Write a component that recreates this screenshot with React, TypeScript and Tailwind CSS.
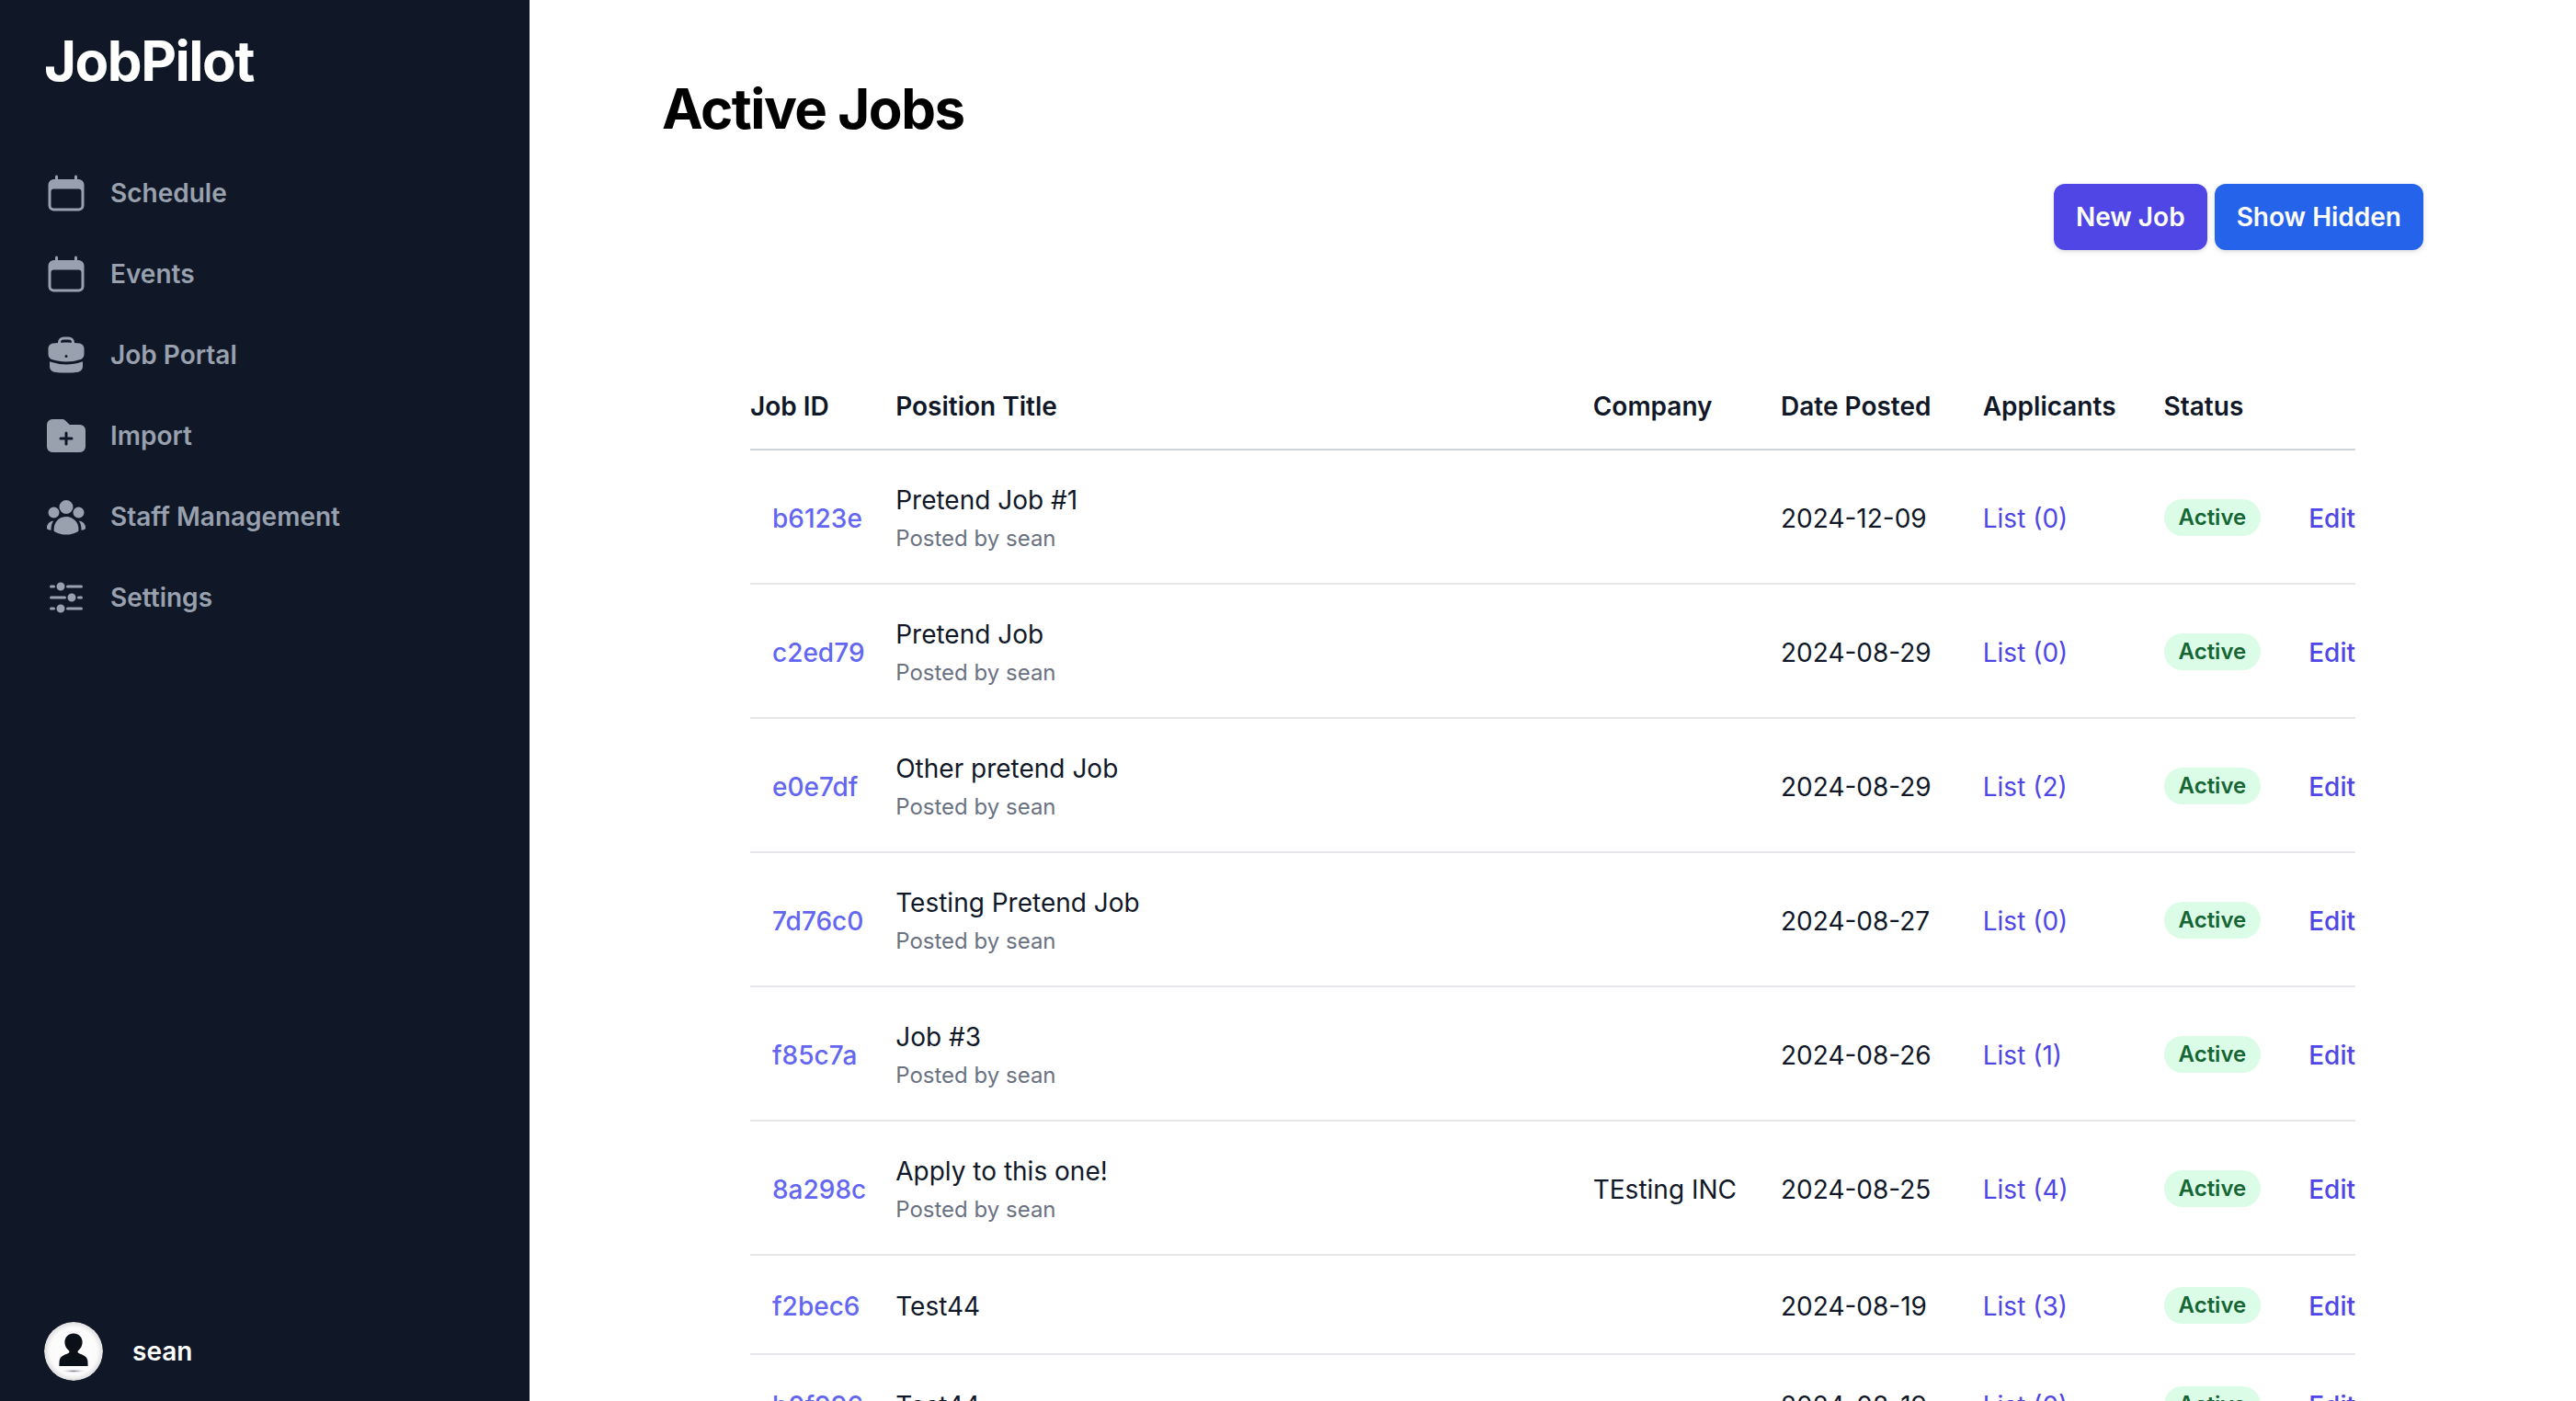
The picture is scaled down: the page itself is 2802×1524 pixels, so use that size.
import React from "react";

const icons: Record<string, React.ReactNode> = {
  calendar: (
    <path
      fillRule="evenodd"
      clipRule="evenodd"
      d="M6.75 2.25A.75.75 0 0 1 7.5 3v1.5h9V3A.75.75 0 0 1 18 3v1.5h.75a3 3 0 0 1 3 3v11.25a3 3 0 0 1-3 3H5.25a3 3 0 0 1-3-3V7.5a3 3 0 0 1 3-3H6V3a.75.75 0 0 1 .75-.75Zm13.5 9a1.5 1.5 0 0 0-1.5-1.5H5.25a1.5 1.5 0 0 0-1.5 1.5v7.5a1.5 1.5 0 0 0 1.5 1.5h13.5a1.5 1.5 0 0 0 1.5-1.5v-7.5Z"
    />
  ),
  briefcase: (
    <>
      <path
        fillRule="evenodd"
        clipRule="evenodd"
        d="M7.5 5.25a3 3 0 0 1 3-3h3a3 3 0 0 1 3 3v.205c.933.085 1.857.197 2.774.334 1.454.218 2.476 1.483 2.476 2.917v3.033c0 1.211-.734 2.352-1.936 2.752A24.726 24.726 0 0 1 12 15.75c-2.73 0-5.357-.442-7.814-1.259-1.202-.4-1.936-1.541-1.936-2.752V8.706c0-1.434 1.022-2.7 2.476-2.917A48.814 48.814 0 0 1 7.5 5.455V5.25Zm7.5 0v.09a49.488 49.488 0 0 0-6 0v-.09a1.5 1.5 0 0 1 1.5-1.5h3a1.5 1.5 0 0 1 1.5 1.5Zm-3 8.25a.75.75 0 1 0 0-1.5.75.75 0 0 0 0 1.5Z"
      />
      <path d="M3 18.4v-2.796a4.3 4.3 0 0 0 .713.31A26.226 26.226 0 0 0 12 17.25c2.892 0 5.68-.468 8.287-1.335.252-.084.49-.189.713-.311V18.4c0 1.452-1.047 2.728-2.523 2.923-2.12.282-4.282.427-6.477.427a49.19 49.19 0 0 1-6.477-.427C4.047 21.128 3 19.852 3 18.4Z" />
    </>
  ),
  folder: (
    <path
      fillRule="evenodd"
      clipRule="evenodd"
      d="M19.5 21a3 3 0 0 0 3-3V9a3 3 0 0 0-3-3h-5.379a.75.75 0 0 1-.53-.22L11.47 3.66A2.25 2.25 0 0 0 9.879 3H4.5a3 3 0 0 0-3 3v12a3 3 0 0 0 3 3h15Zm-6.75-10.5a.75.75 0 0 0-1.5 0v2.25H9a.75.75 0 0 0 0 1.5h2.25v2.25a.75.75 0 0 0 1.5 0v-2.25H15a.75.75 0 0 0 0-1.5h-2.25V10.5Z"
    />
  ),
  group: (
    <>
      <path
        fillRule="evenodd"
        clipRule="evenodd"
        d="M8.25 6.75a3.75 3.75 0 1 1 7.5 0 3.75 3.75 0 0 1-7.5 0ZM15.75 9.75a3 3 0 1 1 6 0 3 3 0 0 1-6 0ZM2.25 9.75a3 3 0 1 1 6 0 3 3 0 0 1-6 0ZM6.31 15.117A6.745 6.745 0 0 1 12 12a6.745 6.745 0 0 1 6.709 7.498.75.75 0 0 1-.372.568A12.696 12.696 0 0 1 12 21.75c-2.305 0-4.47-.612-6.337-1.684a.75.75 0 0 1-.372-.568 6.787 6.787 0 0 1 1.019-4.38Z"
      />
      <path d="M5.082 14.254a8.287 8.287 0 0 0-1.308 5.135 9.687 9.687 0 0 1-1.764-.44l-.115-.04a.563.563 0 0 1-.373-.487l-.01-.121a3.75 3.75 0 0 1 3.57-4.047ZM20.226 19.389a8.287 8.287 0 0 0-1.308-5.135 3.75 3.75 0 0 1 3.57 4.047l-.01.121a.563.563 0 0 1-.373.486l-.115.04c-.567.2-1.156.349-1.764.441Z" />
    </>
  ),
  sliders: (
    <path d="M18.75 12.75h1.5a.75.75 0 0 0 0-1.5h-1.5a.75.75 0 0 0 0 1.5ZM12 6a.75.75 0 0 1 .75-.75h7.5a.75.75 0 0 1 0 1.5h-7.5A.75.75 0 0 1 12 6ZM12 18a.75.75 0 0 1 .75-.75h7.5a.75.75 0 0 1 0 1.5h-7.5A.75.75 0 0 1 12 18ZM3.75 6.75h1.5a.75.75 0 1 0 0-1.5h-1.5a.75.75 0 0 0 0 1.5ZM5.25 18.75h-1.5a.75.75 0 0 1 0-1.5h1.5a.75.75 0 0 1 0 1.5ZM3 12a.75.75 0 0 1 .75-.75h7.5a.75.75 0 0 1 0 1.5h-7.5A.75.75 0 0 1 3 12ZM9 3.75a2.25 2.25 0 1 0 0 4.5 2.25 2.25 0 0 0 0-4.5ZM12.750 12a2.25 2.25 0 1 1 4.5 0 2.25 2.25 0 0 1-4.5 0ZM9 15.75a2.25 2.25 0 1 0 0 4.5 2.25 2.25 0 0 0 0-4.5Z" />
  ),
};

const nav = [
  { label: "Schedule", icon: "calendar" },
  { label: "Events", icon: "calendar" },
  { label: "Job Portal", icon: "briefcase" },
  { label: "Import", icon: "folder" },
  { label: "Staff Management", icon: "group" },
  { label: "Settings", icon: "sliders" },
];

const jobs = [
  { id: "b6123e", title: "Pretend Job #1", by: true, company: "", date: "2024-12-09", list: 0 },
  { id: "c2ed79", title: "Pretend Job", by: true, company: "", date: "2024-08-29", list: 0 },
  { id: "e0e7df", title: "Other pretend Job", by: true, company: "", date: "2024-08-29", list: 2 },
  { id: "7d76c0", title: "Testing Pretend Job", by: true, company: "", date: "2024-08-27", list: 0 },
  { id: "f85c7a", title: "Job #3", by: true, company: "", date: "2024-08-26", list: 1 },
  { id: "8a298c", title: "Apply to this one!", by: true, company: "TEsting INC", date: "2024-08-25", list: 4 },
  { id: "f2bec6", title: "Test44", by: false, company: "", date: "2024-08-19", list: 3 },
  { id: "b0f996", title: "Test44", by: false, company: "", date: "2024-08-19", list: 0 },
];

function Avatar() {
  return (
    <svg viewBox="0 0 32 32" className="h-8 w-8 shrink-0 rounded-full">
      <defs>
        <radialGradient id="avatar-bg" cx="50%" cy="50%" r="50%">
          <stop offset="0%" stopColor="#ffffff" />
          <stop offset="80%" stopColor="#fbfbfb" />
          <stop offset="100%" stopColor="#dddddd" />
        </radialGradient>
        <radialGradient id="avatar-shadow" cx="50%" cy="50%" r="50%">
          <stop offset="0%" stopColor="#6b7280" />
          <stop offset="100%" stopColor="#ffffff" stopOpacity="0" />
        </radialGradient>
      </defs>
      <circle cx="16" cy="16" r="16" fill="url(#avatar-bg)" />
      <path
        d="M16 6.300c2.700 0 4.800 2 4.800 4.700 0 2-.9 3.500-2.200 4.500-.5.4-.4 1.200.2 1.500 2.200 1 4.100 1.400 4.800 3.700.2.700.2 2.400.2 3.300H8.200c0-.9 0-2.600.2-3.300.7-2.300 2.600-2.700 4.800-3.700.6-.3.7-1.100.2-1.500-1.300-1-2.200-2.500-2.200-4.500 0-2.700 2.100-4.700 4.800-4.700Z"
        fill="#0b0f17"
      />
      <ellipse cx="16" cy="26.700" rx="7.500" ry="1" fill="url(#avatar-shadow)" />
    </svg>
  );
}

export default function App() {
  return (
    <div className="h-screen overflow-hidden bg-white font-['Inter',sans-serif]">
      <div className="flex h-full [zoom:2]">
        <aside className="flex w-72 shrink-0 flex-col bg-gray-900">
          <div className="flex grow translate-y-px flex-col gap-y-5 px-6">
            <div className="flex h-16 items-center text-3xl font-bold tracking-tight text-white">JobPilot</div>
            <nav className="-mx-2 space-y-1">
              {nav.map((item) => (
                <a key={item.label} className="flex gap-x-3 rounded-md p-2 text-sm/6 font-semibold text-gray-400">
                  <svg viewBox="0 0 24 24" fill="currentColor" className="h-6 w-6 shrink-0">
                    {icons[item.icon]}
                  </svg>
                  {item.label}
                </a>
              ))}
            </nav>
          </div>
          <div className="flex translate-y-px items-center gap-x-4 px-6 py-3 text-sm/6 font-semibold text-white">
            <Avatar />
            <span>sean</span>
          </div>
        </aside>

        <main className="flex min-w-0 flex-1 flex-col pt-10 pr-21 pl-18">
          <h1 className="translate-y-px text-3xl font-bold tracking-tight text-black">Active Jobs</h1>
          <div className="mt-6 -mr-px flex justify-end gap-1">
            <button className="rounded-md bg-[#4f46e5] px-3 py-2 text-sm font-semibold text-white shadow-sm">New Job</button>
            <button className="rounded-md bg-[#2563eb] px-3 py-2 text-sm font-semibold text-white shadow-sm">Show Hidden</button>
          </div>

          <div className="mt-15 mr-9 ml-12">
            <table className="w-full border-collapse text-left text-sm">
              <thead>
                <tr className="border-b border-gray-300 text-gray-900">
                  <th className="translate-y-px py-3.5 pr-4 font-semibold whitespace-nowrap">Job ID</th>
                  <th className="w-full translate-y-px py-3.5 font-semibold whitespace-nowrap">Position Title</th>
                  <th className="translate-y-px py-3.5 pr-6 font-semibold whitespace-nowrap">Company</th>
                  <th className="translate-y-px py-3.5 pr-7 font-semibold whitespace-nowrap">Date Posted</th>
                  <th className="translate-y-px py-3.5 pr-6.5 font-semibold whitespace-nowrap">Applicants</th>
                  <th className="translate-y-px py-3.5 pr-6.5 font-semibold whitespace-nowrap">Status</th>
                  <th className="py-3.5"></th>
                </tr>
              </thead>
              <tbody className="divide-y divide-gray-200">
                {jobs.map((job) => (
                  <tr key={job.id}>
                    <td className="translate-y-px py-4 pr-4 pl-3 font-medium whitespace-nowrap text-[#6366f1]">{job.id}</td>
                    <td className="translate-y-px py-4 whitespace-nowrap text-gray-900">
                      <div>{job.title}</div>
                      {job.by && <div className="mt-0.5 text-xs/4.5 text-gray-500">Posted by sean</div>}
                    </td>
                    <td className="translate-y-px py-4 pr-6 whitespace-nowrap text-gray-900">{job.company}</td>
                    <td className="translate-y-px py-4 pr-7 whitespace-nowrap text-gray-900">{job.date}</td>
                    <td className="translate-y-px py-4 pr-6.5 whitespace-nowrap text-[#4f46e5]">List ({job.list})</td>
                    <td className="py-4 pr-6.5 whitespace-nowrap">
                      <span className="inline-flex rounded-full bg-green-100 px-2 text-xs/5 font-semibold text-[#166534]">Active</span>
                    </td>
                    <td className="translate-y-px py-4 text-right font-medium whitespace-nowrap text-[#4f46e5]">Edit</td>
                  </tr>
                ))}
              </tbody>
            </table>
          </div>
        </main>
      </div>
    </div>
  );
}
